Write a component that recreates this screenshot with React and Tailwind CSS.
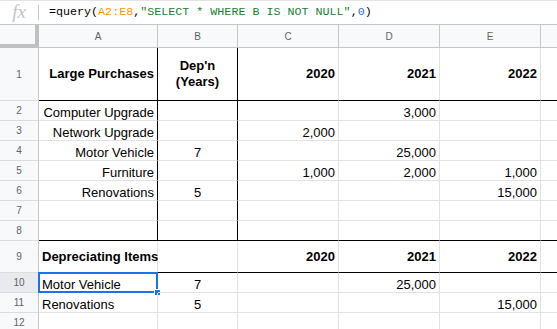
import React from "react";

const cols = "grid grid-cols-[39px_119px_80px_101px_101px_101px_1fr]";

// a: align, b: bold, rB: black right border, bB: black bottom border
const rows = [
  {
    n: "1",
    h: "h-[53px]",
    mid: true,
    bB: true,
    rB: [true, true],
    cells: [
      { t: "Large Purchases", a: "r", b: true },
      { t: "Dep'n\n(Years)", a: "c", b: true },
      { t: "2020", a: "r", b: true },
      { t: "2021", a: "r", b: true },
      { t: "2022", a: "r", b: true },
    ],
  },
  { n: "2", rB: [true, true], cells: [{ t: "Computer Upgrade", a: "r" }, {}, {}, { t: "3,000", a: "r" }, {}] },
  { n: "3", rB: [true, true], cells: [{ t: "Network Upgrade", a: "r" }, {}, { t: "2,000", a: "r" }, {}, {}] },
  { n: "4", rB: [true, true], cells: [{ t: "Motor Vehicle", a: "r" }, { t: "7", a: "c" }, {}, { t: "25,000", a: "r" }, {}] },
  { n: "5", rB: [true, true], cells: [{ t: "Furniture", a: "r" }, {}, { t: "1,000", a: "r" }, { t: "2,000", a: "r" }, { t: "1,000", a: "r" }] },
  { n: "6", rB: [true, true], cells: [{ t: "Renovations", a: "r" }, { t: "5", a: "c" }, {}, {}, { t: "15,000", a: "r" }] },
  { n: "7", rB: [true, true], cells: [{}, {}, {}, {}, {}] },
  { n: "8", rB: [true, true], bB: true, cells: [{}, {}, {}, {}, {}] },
  {
    n: "9",
    h: "h-[32px]",
    mid: true,
    bB: true,
    cells: [
      { t: "Depreciating Items", a: "l", b: true },
      {},
      { t: "2020", a: "r", b: true },
      { t: "2021", a: "r", b: true },
      { t: "2022", a: "r", b: true },
    ],
  },
  { n: "10", sel: true, cells: [{ t: "Motor Vehicle", a: "l", sel: true }, { t: "7", a: "c" }, {}, { t: "25,000", a: "r" }, {}] },
  { n: "11", cells: [{ t: "Renovations", a: "l" }, { t: "5", a: "c" }, {}, {}, { t: "15,000", a: "r" }] },
  { n: "12", cells: [{}, {}, {}, {}, {}] },
];

function Cell({ c, rBlack, bBlack, mid, last }) {
  const align =
    c.a === "r" ? "justify-end text-right" : c.a === "c" ? "justify-center text-center" : "justify-start text-left";
  return (
    <div
      className={`relative flex px-[3px] whitespace-pre border-b ${last ? "" : "border-r"} ${
        rBlack ? "border-r-black" : "border-r-[#e2e2e3]"
      } ${bBlack ? "border-b-black" : "border-b-[#e2e2e3]"} ${mid ? "items-center" : "items-end"} ${align} ${
        c.b ? "font-bold" : ""
      }`}
    >
      {c.t && <span className={mid ? "leading-[16px]" : "leading-[14px]"}>{c.t}</span>}
      {c.sel && (
        <div className="absolute -inset-px border-2 border-[#1a73e8]">
          <div className="absolute -right-[5px] -bottom-[5px] w-[7px] h-[7px] bg-[#1a73e8] border border-white" />
        </div>
      )}
    </div>
  );
}

export default function App() {
  return (
    <div className="w-[557px] h-[329px] overflow-hidden bg-white text-black text-[13px] font-['Liberation_Sans',Arial,sans-serif]">
      {/* Formula bar */}
      <div className="flex items-center h-[25px] border-t border-b border-t-[#e3e3e3] border-b-[#c7c7c7]">
        <div className="w-[38px] flex justify-center">
          <span className="font-['Liberation_Serif',serif] italic text-[19px] text-[#c4c4c4] leading-none -mt-[2px]">fx</span>
        </div>
        <div className="w-px h-[15px] bg-[#c7c7c7]" />
        <div className="pl-[10px] font-['Liberation_Mono',monospace] text-[11.7px] whitespace-pre">
          =query(<span className="text-[#f29900]">A2:E8</span>,
          <span className="text-[#188038]">"SELECT * WHERE B IS NOT NULL"</span>,
          <span className="text-[#1a73e8]">0</span>)
        </div>
      </div>

      {/* Column headers */}
      <div className={`${cols} h-[23px] bg-[#f8f9fa] text-[10px] text-[#5f6368] border-b border-[#c7c7c7]`}>
        <div className="border-r-4 border-b-4 border-[#c0c0c0] -mb-px" />
        {["A", "B", "C", "D", "E"].map((l) => (
          <div key={l} className="flex items-center justify-center border-r border-[#c7c7c7]">
            {l}
          </div>
        ))}
        <div />
      </div>

      {rows.map((r) => (
        <div key={r.n} className={`${cols} ${r.h || "h-[20px]"}`}>
          <div
            className={`flex items-center justify-center text-[10px] text-[#5f6368] border-r border-b border-r-[#c7c7c7] border-b-[#dadce0] ${
              r.sel ? "bg-[#e8eaed]" : "bg-[#f8f9fa]"
            }`}
          >
            {r.n}
          </div>
          {r.cells.map((c, i) => (
            <Cell key={i} c={c} rBlack={r.rB && r.rB[i]} bBlack={r.bB} mid={r.mid} />
          ))}
          <Cell c={{}} bBlack={r.bB} last />
        </div>
      ))}
    </div>
  );
}
